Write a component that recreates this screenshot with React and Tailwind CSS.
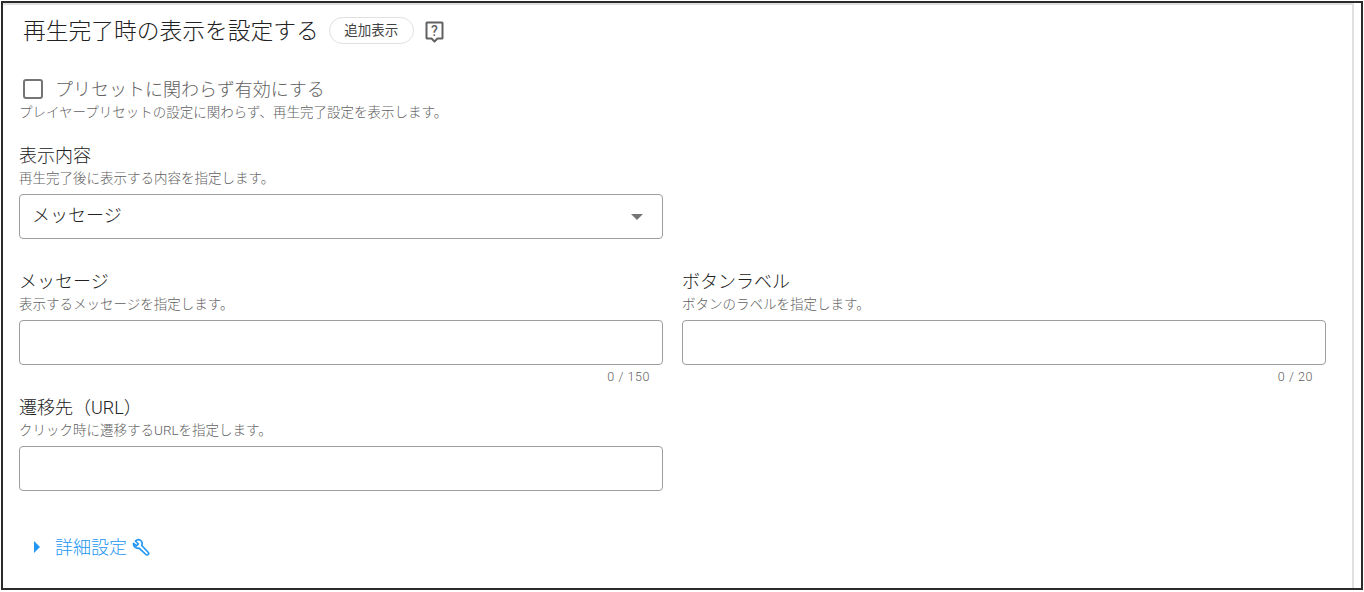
import React from 'react';

function Field({ label, hint, count, className = '' }) {
  return (
    <div className={className}>
      <div className="pt-[2px] text-[18px] leading-[24px] text-[#212121]">{label}</div>
      <div className="mt-[2px] text-[13.5px] leading-[17px] text-[#616161]">{hint}</div>
      <div className="mt-[7px] h-[45px] rounded-[4px] border border-[#9e9e9e] bg-white"></div>
      {count && <div className="mt-[4px] pr-[13px] text-right text-[12.5px] leading-[16px] tracking-[0.55px] text-[#616161]">{count}</div>}
    </div>
  );
}

export default function App() {
  return (
    <div className="h-[592px] w-[1364px] overflow-hidden bg-white pt-px pl-px font-['Roboto','Noto_Sans_CJK_JP',sans-serif] font-light">
      <div className="h-[589px] w-[1362px] border-2 border-[#2b2b2b] bg-white">
        <div className="h-full w-[1351px] border-t-2 border-r-2 border-[#e0e0e0]">
          {/* Title */}
          <div className="mt-[12px] flex h-[27px] items-center pl-[20px]">
            <h1 className="pt-[2px] text-[22.75px] leading-[27px] font-light text-[#212121]">再生完了時の表示を設定する</h1>
            <span className="ml-[10px] flex h-[27px] w-[85px] items-center justify-center rounded-full border border-[#e0e0e0] text-[13.5px] font-normal text-[#424242]">追加表示</span>
            <svg className="ml-[10px]" width="20" height="24" viewBox="0 0 20 24" fill="none">
              <path d="M3 3.5h15a.5.5 0 0 1 .5.5v15a.5.5 0 0 1-.5.5h-4.5l-3 3-3-3H3a.5.5 0 0 1-.5-.5V4a.5.5 0 0 1 .5-.5z" stroke="#616161" strokeWidth="2" strokeLinejoin="round" />
              <text x="10.5" y="16.5" textAnchor="middle" fontSize="14" fontWeight="500" fill="#616161" fontFamily="Roboto">?</text>
            </svg>
          </div>

          {/* Preset checkbox */}
          <div className="mt-[33px] flex h-[24px] items-center pl-[20px]">
            <span className="h-[20px] w-[20px] rounded-[3px] border-2 border-[#757575]"></span>
            <span className="mt-[2px] ml-[12px] text-[18px] leading-[24px] text-[#616161]">プリセットに関わらず有効にする</span>
          </div>
          <div className="mt-[3px] pl-[16px] text-[13.5px] leading-[17px] text-[#616161]">プレイヤープリセットの設定に関わらず、再生完了設定を表示します。</div>

          {/* Form */}
          <div className="mt-[21px] grid w-[1307px] translate-x-[16px] grid-cols-[644px_644px] gap-x-[19px]">
            <div>
              <div className="pt-[2px] text-[18px] leading-[24px] text-[#212121]">表示内容</div>
              <div className="mt-[2px] text-[13.5px] leading-[17px] text-[#616161]">再生完了後に表示する内容を指定します。</div>
              <div className="mt-[7px] flex h-[45px] items-center justify-between rounded-[4px] border border-[#9e9e9e] pr-[19px] pl-[12px] text-[18px] text-[#212121]">
                <span className="-mt-[2px]">メッセージ</span>
                <svg width="12" height="6" viewBox="0 0 12 6"><path d="M0 0h12L6 6z" fill="#757575" /></svg>
              </div>
            </div>
            <div></div>
            <Field className="mt-[29px]" label="メッセージ" hint="表示するメッセージを指定します。" count="0 / 150" />
            <Field className="mt-[29px]" label="ボタンラベル" hint="ボタンのラベルを指定します。" count="0 / 20" />
            <Field className="mt-[9px]" label="遷移先（URL）" hint="クリック時に遷移するURLを指定します。" />
          </div>

          {/* Details */}
          <div className="mt-[44px] flex h-[24px] items-center pl-[31px] text-[18px] text-[#2196f3]">
            <svg width="6" height="12" viewBox="0 0 6 12"><path d="M0 0l6 6-6 6z" fill="#2196f3" /></svg>
            <span className="ml-[15px]">詳細設定</span>
            <svg className="ml-[5px]" width="18" height="18" viewBox="0 0 24 24" fill="none" stroke="#2196f3" strokeWidth="2.2" strokeLinejoin="round">
              <path d="M9.5 2.5a6 6 0 0 0-6 1.5l4 4-2.5 2.5-4-3.5a6 6 0 0 0 7.5 6.5l9 8.5a2 2 0 0 0 3-3l-8.5-9a6 6 0 0 0-2.5-7.5z" transform="translate(1 0)" />
            </svg>
          </div>
        </div>
      </div>
    </div>
  );
}
